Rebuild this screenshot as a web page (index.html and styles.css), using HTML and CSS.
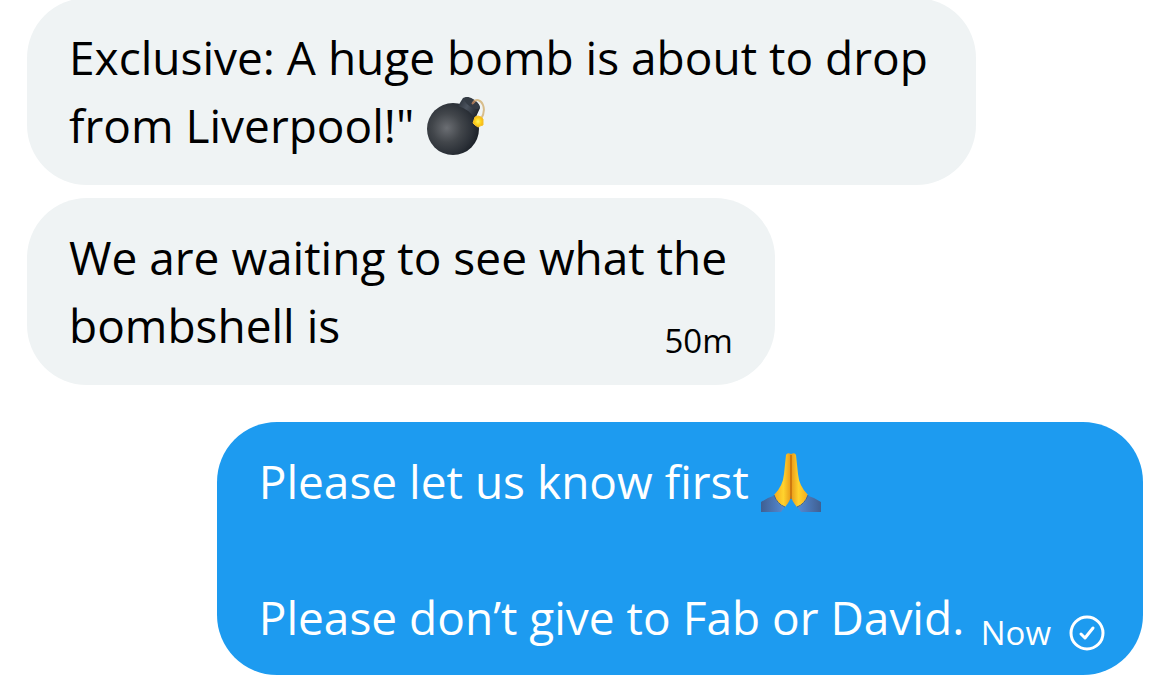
FILE: index.html
```html
<!DOCTYPE html>
<html lang="en">

<head>
    <meta charset="UTF-8">
    <meta name="viewport" content="width=device-width, initial-scale=1">
    <title>Messages</title>
    <link rel="stylesheet" href="styles.css">
</head>

<body>

    <main class="thread">
        <div class="bubble received wide">
            <p class="text">Exclusive: A huge bomb is about to drop<br>from Liverpool!"
                <svg class="emoji" viewBox="0 0 60 60" role="img" aria-label="bomb">
                    <defs>
                        <radialGradient id="ball" cx="0.38" cy="0.48" r="0.62">
                            <stop offset="0" stop-color="#6b6e73"/>
                            <stop offset="0.45" stop-color="#42464b"/>
                            <stop offset="0.8" stop-color="#2b3037"/>
                            <stop offset="1" stop-color="#1b2027"/>
                        </radialGradient>
                        <linearGradient id="cap" x1="0" y1="0" x2="1" y2="0.5">
                            <stop offset="0" stop-color="#252b33"/>
                            <stop offset="0.5" stop-color="#4b535e"/>
                            <stop offset="1" stop-color="#20262e"/>
                        </linearGradient>
                        <radialGradient id="spark">
                            <stop offset="0" stop-color="#fff36a"/>
                            <stop offset="0.5" stop-color="#ffd91f"/>
                            <stop offset="1" stop-color="#f5b31b"/>
                        </radialGradient>
                    </defs>
                    <circle cx="27" cy="33" r="26" fill="url(#ball)"/>
                    <path d="M32 10L37 2Q40 0 46 3Q53 7 54 12L49 23Q43 13 32 10Z" fill="url(#cap)"/>
                    <ellipse cx="46" cy="7" rx="9" ry="4" transform="rotate(34 46 7)" fill="#343b44"/>
                    <path d="M47 7C50 2 55 4 57 9C59 14 58 18 55 23" fill="none" stroke="#d8bd8b" stroke-width="2"/>
                    <path d="M46 8L49 5" stroke="#a67557" stroke-width="2"/>
                    <path d="M52 20L55 21L57 23L57 26L57 29L54 30L52 31L49 29L47 27L48 24L49 21Z" fill="url(#spark)" stroke="#f6c329" stroke-width="1" stroke-linejoin="round"/>
                </svg>
            </p>
        </div>

        <div class="bubble received narrow">
            <p class="text">We are waiting to see what the<br>bombshell is</p>
            <span class="meta">50m</span>
        </div>

        <div class="bubble sent">
            <p class="text">Please let us know first
                <svg class="emoji" viewBox="0 0 60 60" role="img" aria-label="folded hands">
                    <defs>
                        <linearGradient id="handLeft" x1="0" y1="0" x2="1" y2="0">
                            <stop offset="0" stop-color="#f6a91b"/>
                            <stop offset="0.55" stop-color="#ffd32e"/>
                            <stop offset="1" stop-color="#e99a18"/>
                        </linearGradient>
                        <linearGradient id="handRight" x1="1" y1="0" x2="0" y2="0">
                            <stop offset="0" stop-color="#f6a91b"/>
                            <stop offset="0.55" stop-color="#ffd32e"/>
                            <stop offset="1" stop-color="#e99a18"/>
                        </linearGradient>
                        <linearGradient id="sleeveLeft" x1="0" y1="0" x2="1" y2="0">
                            <stop offset="0" stop-color="#405f91"/>
                            <stop offset="1" stop-color="#5790dc"/>
                        </linearGradient>
                        <linearGradient id="sleeveRight" x1="1" y1="0" x2="0" y2="0">
                            <stop offset="0" stop-color="#405f91"/>
                            <stop offset="1" stop-color="#5790dc"/>
                        </linearGradient>
                    </defs>
                    <path d="M0 50Q8 45 15 43Q18 52 26 52L20 60H0Z" fill="url(#sleeveLeft)"/>
                    <path d="M60 50Q52 45 45 43Q42 52 34 52L40 60H60Z" fill="url(#sleeveRight)"/>
                    <path d="M25 3Q26 0 30 2V43Q30 48 24 55Q16 53 13 43Q22 34 23 22Z" fill="url(#handLeft)"/>
                    <path d="M35 3Q34 0 30 2V43Q30 48 36 55Q44 53 47 43Q38 34 37 22Z" fill="url(#handRight)"/>
                    <path d="M30 3V47" stroke="#c46d0b" stroke-width="1.5"/>
                    <path d="M13 43Q16 52 24 55M47 43Q44 52 36 55" fill="none" stroke="#2e63a9" stroke-width="1"/>
                </svg><br><br>Please don’t give to Fab or David.</p>
            <span class="meta">Now
                <svg class="status" viewBox="0 0 36 36" role="img" aria-label="Sent">
                    <circle cx="18" cy="18" r="16"/>
                    <path d="M12 19L16 23L24 13"/>
                </svg>
            </span>
        </div>
    </main>

</body>

</html>
```
FILE: styles.css
```css
* {
    box-sizing: border-box;
}

body {
    margin: 0;
    background-color: #fff;
    font-family: "Open Sans", "Noto Sans", sans-serif;
}

.thread {
    display: flex;
    flex-direction: column;
    align-items: flex-start;
    margin-top: -2px;
    padding: 0 27px 18px;
}

.bubble {
    display: grid;
    padding: 25px 42px 26px;
    border-radius: 60px;
}

.received {
    margin-bottom: 13px;
    background-color: #eff3f4;
    color: #000;
}

.sent {
    width: 83%;
    margin-top: 24px;
    padding: 25px 38px 24px 42px;
    align-self: flex-end;
    background-color: #1d9bf0;
    color: #fff;
}

.wide {
    width: 85%;
}

.narrow {
    width: 67%;
}

.text,
.meta {
    grid-area: 1 / 1;
}

.text {
    margin: 0;
    font-size: 46px;
    line-height: 68px;
}

.meta {
    display: flex;
    align-items: center;
    align-self: end;
    justify-self: end;
    gap: 18px;
    font-size: 33px;
    line-height: 36px;
}

.emoji {
    width: 60px;
    height: 60px;
    vertical-align: -13px;
}

.status {
    width: 36px;
    height: 36px;
    fill: none;
    stroke: #fff;
    stroke-width: 3;
    stroke-linecap: round;
    stroke-linejoin: round;
}
```
